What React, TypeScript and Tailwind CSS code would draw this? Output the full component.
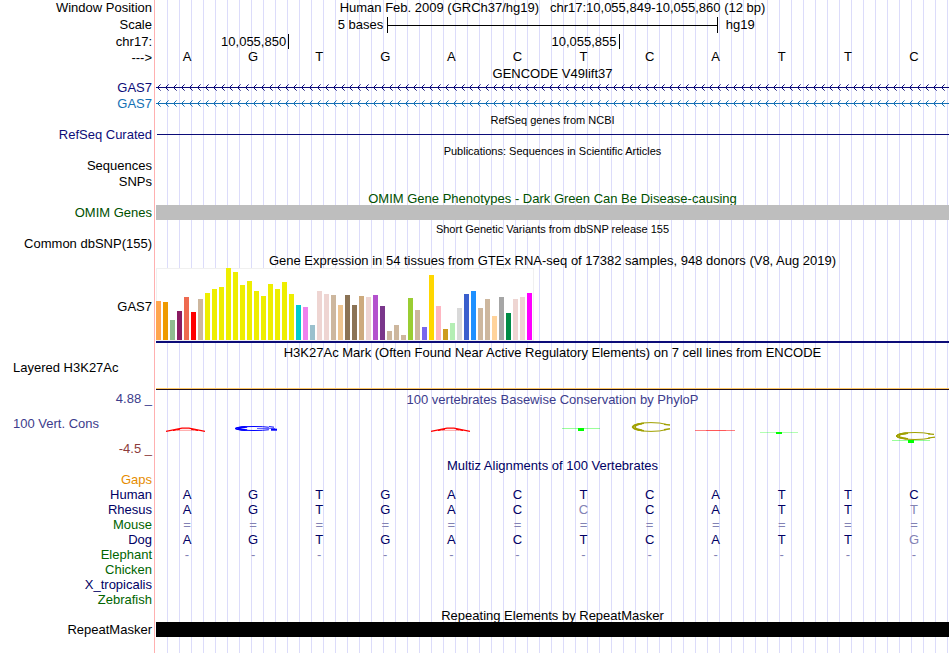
import type { ReactNode } from "react"
import clsx from "clsx"

type RowProps = {
  label?: ReactNode
  labelClass?: string
  className?: string
  children?: ReactNode
}

// one strip of the browser: label on the left, track over the guide lines on the right
function Row({ label, labelClass, className, children }: RowProps) {
  return (
    <div className={clsx("flex", className)}>
      <div className={clsx("w-[154px] shrink-0 pr-0.5 text-right whitespace-nowrap", labelClass)}>{label}</div>
      <div className="flex min-w-0 flex-1 border-l border-[#ffb0b0] pl-px">
        <div className="min-w-0 flex-1 bg-[repeating-linear-gradient(to_right,transparent_0_11px,#dcdcfa_11px_12px)]">
          {children}
        </div>
      </div>
    </div>
  )
}

function Title({ children, className }: { children: ReactNode; className?: string }) {
  return <h2 className={clsx("text-center whitespace-pre", className)}>{children}</h2>
}

function Bases({ seq, className, faded = [] }: { seq: string; className?: string; faded?: number[] }) {
  return (
    <div className={clsx("grid grid-cols-12 text-center leading-[15px]", className)}>
      {seq.split("").map((base, i) => (
        <span key={i} className={clsx("pr-1", faded.includes(i) && "text-[#8282b4]")}>{base}</span>
      ))}
    </div>
  )
}

function StrandLine({ id, color }: { id: string; color: string }) {
  return (
    <svg className="block h-[15px] w-full" shapeRendering="crispEdges" aria-hidden="true">
      <defs>
        <pattern id={id} width="8" height="15" patternUnits="userSpaceOnUse">
          <rect x="0" y="7" width="8" height="1" fill={color} />
          <rect x="2" y="6" width="1" height="1" fill={color} />
          <rect x="2" y="8" width="1" height="1" fill={color} />
          <rect x="3" y="5" width="1" height="1" fill={color} />
          <rect x="3" y="9" width="1" height="1" fill={color} />
          <rect x="4" y="4" width="1" height="1" fill={color} opacity="0.6" />
          <rect x="4" y="10" width="1" height="1" fill={color} opacity="0.6" />
        </pattern>
      </defs>
      <rect width="100%" height="15" fill={`url(#${id})`} />
    </svg>
  )
}

const tissues: [number, string][] = [
  [39, "#ffa54f"], [38, "#ee9a00"], [20, "#8fbc8f"], [29, "#8b1c62"], [43, "#ee6a50"], [28, "#ff0000"],
  [41, "#cdb79e"], [47, "#eeee00"], [51, "#eeee00"], [53, "#eeee00"], [72, "#eeee00"], [68, "#eeee00"],
  [55, "#eeee00"], [59, "#eeee00"], [49, "#eeee00"], [44, "#eeee00"], [56, "#eeee00"], [51, "#eeee00"],
  [58, "#eeee00"], [46, "#eeee00"], [35, "#00cdcd"], [33, "#ee82ee"], [15, "#9ac0cd"], [49, "#eed5d2"],
  [46, "#eed5d2"], [45, "#cdb79e"], [35, "#eec591"], [45, "#8b7355"], [35, "#8b7355"], [44, "#cdaa7d"],
  [43, "#eed5d2"], [45, "#b452cd"], [34, "#7a378b"], [9, "#cdb79e"], [15, "#cdb79e"], [5, "#cdb79e"],
  [42, "#9acd32"], [30, "#cdb79e"], [13, "#7a67ee"], [65, "#ffd700"], [34, "#ffb6c1"], [11, "#cd9b1d"],
  [17, "#b4eeb4"], [32, "#d9d9d9"], [46, "#3a5fcd"], [49, "#1e90ff"], [32, "#cdb79e"], [41, "#cdb79e"],
  [24, "#ffd39b"], [43, "#a6a6a6"], [27, "#008b45"], [41, "#eed5d2"], [43, "#eed5d2"], [47, "#ff00ff"],
]

function ExpressionChart() {
  return (
    <div className="border-b-2 border-[#0c0c78]">
      <svg className="block" width="378" height="73" shapeRendering="crispEdges" role="img" aria-label="GAS7 expression">
        <rect width="378" height="73" fill="#f0f0f0" />
        <rect x="1" y="1" width="376" height="71" fill="#fff" />
        {tissues.map(([h, fill], i) => (
          <rect key={i} x={i * 7} y={72 - h} width="5" height={h} fill={fill} />
        ))}
      </svg>
    </div>
  )
}

// flat ring, open on the right and heavier on its left side
function Ring({ cx, cy, ry, color }: { cx: number; cy: number; ry: number; color: string }) {
  return (
    <g stroke={color}>
      <ellipse cx={cx} cy={cy} rx="19" ry={ry} pathLength="100" strokeDasharray="88 12" strokeDashoffset="-6" />
      <ellipse cx={cx} cy={cy} rx="18" ry={ry - 0.4} strokeWidth="1.6" pathLength="100" strokeDasharray="32 68" strokeDashoffset="-34" />
      <ellipse cx={cx} cy={cy} rx="16" ry={ry - 0.4} strokeWidth="1.8" pathLength="100" strokeDasharray="24 76" strokeDashoffset="-38" />
    </g>
  )
}

function Peak({ x }: { x: number }) {
  return (
    <g stroke="#ff0000">
      <polyline points={`${x},23.4 ${x + 16},20.2 ${x + 23},20.2 ${x + 39},23.4`} strokeWidth="1.2" />
      <line x1={x + 7} y1="22.6" x2={x + 14} y2="21.2" />
      <line x1={x + 25} y1="21.2" x2={x + 32} y2="22.6" />
      <line x1={x + 11} y1="22.3" x2={x + 28} y2="22.3" strokeWidth="0.4" />
    </g>
  )
}

function ConservationLogo() {
  return (
    <svg className="block h-[50px] w-full" viewBox="0 0 793 50" preserveAspectRatio="none" fill="none" aria-hidden="true">
      <Peak x={10} />
      <Peak x={275} />
      <g stroke="#ff0000">
        <line x1="539" y1="22.5" x2="579" y2="22.5" opacity="0.5" />
        <line x1="550" y1="22.5" x2="570" y2="22.5" opacity="0.3" />
      </g>
      <g stroke="#0000ff">
        <Ring cx={98} cy={20.5} ry={2} color="#0000ff" />
        <line x1="101" y1="20.5" x2="119" y2="20.5" opacity="0.6" />
        <line x1="113" y1="18.6" x2="118" y2="19.2" />
        <line x1="115" y1="21.7" x2="121" y2="21.7" strokeWidth="2" />
      </g>
      <Ring cx={495} cy={19} ry={4.4} color="#a0a000" />
      <line x1="508" y1="16.4" x2="514" y2="17" stroke="#a0a000" strokeWidth="1.4" />
      <line x1="508" y1="21.8" x2="514" y2="20.8" stroke="#a0a000" strokeWidth="1.4" />
      <Ring cx={759} cy={28} ry={3.5} color="#a0a000" />
      <line x1="772" y1="25.8" x2="778" y2="26.4" stroke="#a0a000" strokeWidth="1.2" />
      <line x1="772" y1="30" x2="779" y2="29.2" stroke="#a0a000" strokeWidth="1.2" />
      <g fill="#00ff00">
        <rect x="406" y="20" width="38" height="1" opacity="0.4" />
        <rect x="422" y="20" width="6" height="3" />
        <rect x="604" y="24" width="38" height="1" opacity="0.3" />
        <rect x="620" y="24" width="6" height="2" />
        <rect x="736" y="32" width="38" height="1" opacity="0.4" />
        <rect x="752" y="32" width="6" height="3" />
      </g>
    </svg>
  )
}

const navy = "text-[#0c0c78]"
const green = "text-[#006400]"

const species = [
  { name: "Human", color: "text-[#000064]", seq: "AGTGACTCATTC" },
  { name: "Rhesus", color: "text-[#000064]", seq: "AGTGACCCATTT", faded: [6, 11] },
  { name: "Mouse", color: green, seq: "============", seqColor: "text-[#8282b4]" },
  { name: "Dog", color: "text-[#000064]", seq: "AGTGACTCATTG", faded: [11] },
  { name: "Elephant", color: green, seq: "------------", seqColor: "text-[#8282b4]" },
  { name: "Chicken", color: green, seq: "" },
  { name: "X_tropicalis", color: "text-[#000064]", seq: "" },
  { name: "Zebrafish", color: green, seq: "" },
]

export default function App() {
  return (
    <main className="mr-px flex min-h-screen flex-col bg-white font-['Liberation_Sans',Arial,sans-serif] text-[13px] leading-4 text-black">
      <Row label="Window Position" className="h-4">
        <Title>{"Human Feb. 2009 (GRCh37/hg19)   chr17:10,055,849-10,055,860 (12 bp)"}</Title>
      </Row>
      <Row label="Scale" className="h-[18px] leading-[18px]">
        <div className="grid grid-cols-24">
          <span className="col-span-7 pr-1 text-right">5 bases</span>
          <div className="col-span-10 mt-px flex h-4 items-center border-x border-black">
            <div className="h-px flex-1 bg-black" />
          </div>
          <span className="col-span-7 pl-2">hg19</span>
        </div>
      </Row>
      <Row label="chr17:" className="h-[15px] leading-[15px]">
        <div className="grid h-full grid-cols-12">
          <span className="col-span-2 pr-0.5 text-right">10,055,850</span>
          <span className="col-span-5 border-l border-black pr-0.5 text-right">10,055,855</span>
          <span className="col-span-5 border-l border-black" />
        </div>
      </Row>
      <Row label="--->" className="h-[17px] leading-[17px]">
        <Bases seq="AGTGACTCATTC" />
      </Row>
      <Row className="h-3.5">
        <Title className="leading-[15px]">GENCODE V49lift37</Title>
      </Row>
      <Row label="GAS7" labelClass={navy} className="h-4">
        <StrandLine id="strand-navy" color="#0c0c78" />
      </Row>
      <Row label="GAS7" labelClass="text-[#1470b4]" className="h-4">
        <StrandLine id="strand-blue" color="#1470b4" />
      </Row>
      <Row className="h-[15px]">
        <Title className="text-[11px]">RefSeq genes from NCBI</Title>
      </Row>
      <Row label="RefSeq Curated" labelClass={navy} className="h-4">
        <div className="ml-px h-2 border-b border-[#0c0c78]" />
      </Row>
      <Row className="h-[15px]">
        <Title className="text-[11px]">Publications: Sequences in Scientific Articles</Title>
      </Row>
      <Row label="Sequences" className="h-4" />
      <Row label="SNPs" className="h-4" />
      <Row className="h-[15px]">
        <Title className="h-[15px] overflow-hidden leading-[17px] text-[#005000]">OMIM Gene Phenotypes - Dark Green Can Be Disease-causing</Title>
      </Row>
      <Row label="OMIM Genes" labelClass="text-[#005000]" className="h-4">
        <div className="h-[15px] bg-[#bebebe]" />
      </Row>
      <Row className="h-[15px]">
        <Title className="text-[11px]">Short Genetic Variants from dbSNP release 155</Title>
      </Row>
      <Row label="Common dbSNP(155)" className="h-4" />
      <Row className="h-4">
        <Title className="leading-[17px]">Gene Expression in 54 tissues from GTEx RNA-seq of 17382 samples, 948 donors (V8, Aug 2019)</Title>
      </Row>
      <Row label="GAS7" labelClass="self-center pt-0.5">
        <ExpressionChart />
      </Row>
      <Row className="h-[17px]">
        <Title className="leading-5">H3K27Ac Mark (Often Found Near Active Regulatory Elements) on 7 cell lines from ENCODE</Title>
      </Row>
      <Row label="Layered H3K27Ac" labelClass="pl-[13px] text-left!" className="h-[31px]">
        <div className="flex h-[30px] flex-col justify-end">
          <div className="h-px bg-[#ffc864]" />
          <div className="h-px bg-[#201020]" />
        </div>
      </Row>
      <Row
        className="h-[67px] leading-[15px]"
        labelClass="flex flex-col gap-2.5 text-[#3c3c8c]"
        label={
          <>
            <span>4.88 _</span>
            <span className="pl-[13px] text-left">100 Vert. Cons</span>
            <span className="text-[#8c3c3c]">-4.5 _</span>
          </>
        }
      >
        <Title className="leading-[17px] text-[#3c3c8c]">100 vertebrates Basewise Conservation by PhyloP</Title>
        <ConservationLogo />
      </Row>
      <Row className="h-3.5">
        <Title className="leading-[15px] text-[#000064]">Multiz Alignments of 100 Vertebrates</Title>
      </Row>
      <Row label="Gaps" labelClass="text-[#e68c00]" className="h-[15px] leading-[15px]" />
      {species.map((s) => (
        <Row key={s.name} label={s.name} labelClass={s.color} className="h-[15px] leading-[15px]">
          <Bases seq={s.seq} faded={s.faded} className={s.seqColor ?? "text-[#000064]"} />
        </Row>
      ))}
      <Row className="h-[15px]">
        <Title className="h-[15px] overflow-hidden leading-[17px]">Repeating Elements by RepeatMasker</Title>
      </Row>
      <Row label="RepeatMasker" className="h-[15px] leading-[15px]">
        <div className="h-full bg-black" />
      </Row>
      <Row className="min-h-4 flex-1" />
    </main>
  )
}
